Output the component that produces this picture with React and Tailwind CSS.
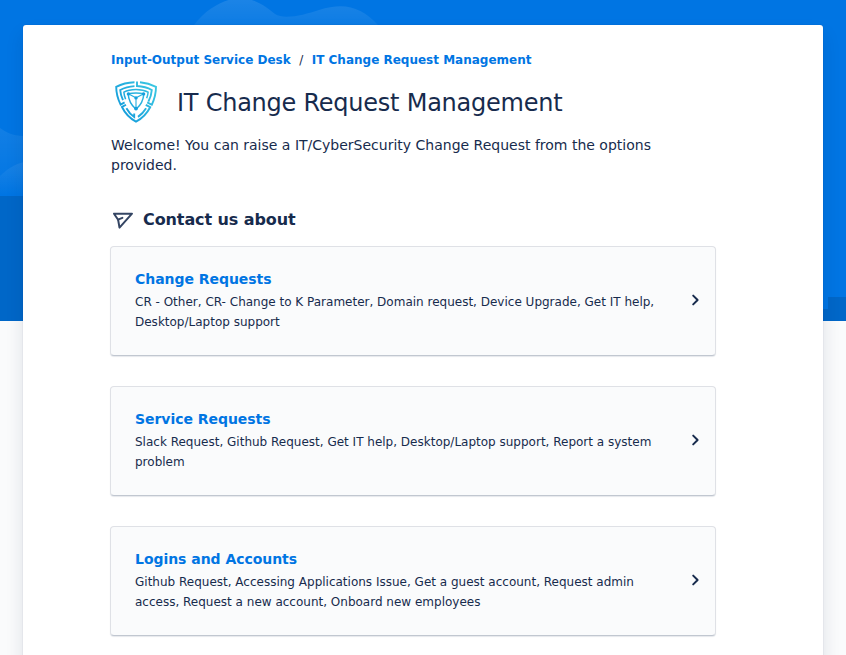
const groups = [
  {
    title: 'Change Requests',
    detail:
      'CR - Other, CR- Change to K Parameter, Domain request, Device Upgrade, Get IT help, Desktop/Laptop support',
  },
  {
    title: 'Service Requests',
    detail:
      'Slack Request, Github Request, Get IT help, Desktop/Laptop support, Report a system problem',
  },
  {
    title: 'Logins and Accounts',
    detail:
      'Github Request, Accessing Applications Issue, Get a guest account, Request admin access, Request a new account, Onboard new employees',
  },
];

function Banner() {
  return (
    <svg className="absolute left-0 top-0" width="846" height="321" viewBox="0 0 846 321" aria-hidden="true">
      <defs>
        <linearGradient id="hill" x1="0" y1="0" x2="0" y2="1">
          <stop offset="0" stopColor="#fff" stopOpacity="0.11" />
          <stop offset="1" stopColor="#fff" stopOpacity="0.03" />
        </linearGradient>
        <linearGradient id="slope" x1="0" y1="0" x2="0" y2="1">
          <stop offset="0" stopColor="#fff" stopOpacity="0.07" />
          <stop offset="1" stopColor="#fff" stopOpacity="0" />
        </linearGradient>
      </defs>
      <rect width="846" height="321" fill="#0075e3" />
      <path d="M194 25C205 10 220 2 232 -1H248C261 2 268 9 275 14C284 20 304 15 319 10C345 2 361 7 378 25V35H194Z" fill="url(#hill)" />
      <path d="M0 128C6 132 12 136 24 136V195H0Z" fill="url(#slope)" />
      <path d="M0 176C7 169 15 164 24 162V196H0Z" fill="url(#slope)" />
      <rect y="196" width="60" height="125" fill="#0067c8" />
      <path d="M800 309H828V297H846V321H800Z" fill="#0067c8" />
    </svg>
  );
}

function ShieldLogo() {
  return (
    <svg width="50" height="48" viewBox="0 0 50 48" fill="none" stroke="url(#shield)" strokeWidth="1.9" aria-hidden="true">
      <defs>
        <linearGradient id="shield" gradientUnits="userSpaceOnUse" x1="4" y1="40" x2="46" y2="8">
          <stop offset="0" stopColor="#0e95da" />
          <stop offset="1" stopColor="#3bc8e2" />
        </linearGradient>
      </defs>
      <path d="M23.5 4.2C16.5 4.4 10.5 6 5.2 8.8C5.2 15.5 6.8 21 9.6 26.6L13.6 24.4" />
      <path d="M26 3.4V8C32 8.3 36.5 9.5 40.8 12C40.5 16 39.2 20 37.4 23.7" />
      <path d="M29 4.2C35 4.8 40 6.3 45 8.8C45 15.5 43.5 21 40.8 26.8L36.2 24.4" />
      <path d="M23.5 8.1C18 8.4 13.5 9.6 9.2 12C9.5 15.8 10.4 19 12 22.2" />
      <path d="M14.6 21.2C13.6 18.6 13 16.5 12.9 14.2C16.3 12.3 19.5 11.6 25 11.6C30.5 11.6 33.7 12.4 37.1 14.2C36.9 16.3 36.5 18.2 35.7 20.2" strokeWidth="1.5" />
      <path d="M15 26.7L11 29C14.1 35.5 18.6 40.2 25 43.6C31.5 40.2 36 35.4 39.2 29.2L34.8 26.8" />
      <path d="M15.4 30.2C17.5 34 20 36.8 23.2 39V35.6M27 38.9C30.6 36.4 33 33.6 35.1 30.2" />
      <path d="M17.2 15.8Q25 14 32.8 15.8Q32.4 25 25 31.3Q17.6 25 17.2 15.8Z" strokeWidth="1.5" />
      <path d="M17.2 15.8L25 19.8L32.8 15.8M25 19.8V31" strokeWidth="1.1" />
      <g fill="#159fdd" stroke="none">
        <circle cx="17.4" cy="15.9" r="1.7" />
        <circle cx="32.6" cy="15.9" r="1.7" />
        <circle cx="25" cy="19.9" r="1.7" />
        <circle cx="25" cy="30.6" r="1.9" />
      </g>
    </svg>
  );
}

function SendIcon() {
  return (
    <svg width="24" height="24" viewBox="0 0 24 24" fill="none" stroke="#344563" strokeWidth="2" strokeLinejoin="round" strokeLinecap="round" aria-hidden="true">
      <path d="M3 5.7H21L8.5 19.6L7.1 11.7Z" />
      <path d="M7.1 11.7L11.4 9.9" />
    </svg>
  );
}

function RequestCard({ title, detail }) {
  return (
    <a className="flex h-[110px] w-[606px] rounded-[4px] border border-[#dfe1e6] border-b-[#c1c7d0] bg-[#fafbfc] pl-6 pr-3 pt-[22px] shadow-[0_1px_1px_rgba(9,30,66,0.1)]">
      <div className="w-[532px]">
        <h3 className="text-sm font-bold leading-5 tracking-[-0.003em] text-[#0075e3]">{title}</h3>
        <p className="mt-[3px] text-xs leading-5">{detail}</p>
      </div>
      <svg className="ml-auto mt-[19px]" width="16" height="24" viewBox="0 0 16 24" fill="none" stroke="#172b4d" strokeWidth="2" strokeLinecap="round" strokeLinejoin="round" aria-hidden="true">
        <path d="M6.2 7.6L10.6 12L6.2 16.4" />
      </svg>
    </a>
  );
}

export default function App() {
  return (
    <div className="relative h-[655px] overflow-hidden bg-[#fafbfc] font-['DejaVu_Sans',sans-serif] text-[#172b4d]">
      <Banner />
      <main className="relative ml-[23px] mt-[25px] h-[700px] w-[800px] rounded-[3px] bg-white pl-[87px] pt-[25px] shadow-[0_0_1px_rgba(9,30,66,0.31),0_10px_18px_rgba(9,30,66,0.12)]">
        <nav className="flex gap-[8.5px] pl-px text-xs leading-5">
          <a className="font-bold text-[#0075e3]">Input-Output Service Desk</a>
          <span>/</span>
          <a className="font-bold text-[#0075e3]">IT Change Request Management</a>
        </nav>
        <header className="mt-2 flex h-12 items-center gap-4 pl-px">
          <ShieldLogo />
          <h1 className="pt-0.5 text-2xl leading-7 tracking-[-0.01em]">IT Change Request Management</h1>
        </header>
        <p className="mt-[9px] w-[580px] pl-px text-sm leading-5">
          Welcome! You can raise a IT/CyberSecurity Change Request from the options provided.
        </p>
        <h2 className="mt-[33px] flex h-6 items-center gap-2 pl-px text-base font-bold tracking-[-0.006em]">
          <SendIcon />
          Contact us about
        </h2>
        <div className="mt-3.5 flex flex-col gap-[30px]">
          {groups.map((group) => (
            <RequestCard key={group.title} {...group} />
          ))}
        </div>
      </main>
    </div>
  );
}
